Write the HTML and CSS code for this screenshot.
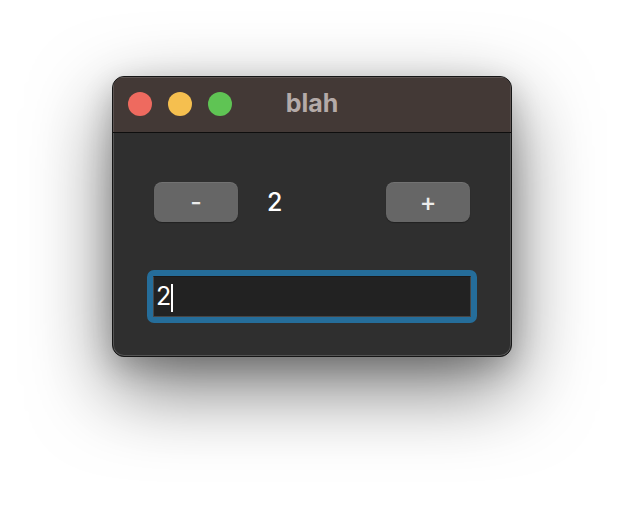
FILE: index.html
```html
<!DOCTYPE html>
<html lang="en">

<head>
    <meta charset="UTF-8" />
    <title>blah</title>
    <link rel="stylesheet" href="styles.css">
</head>

<body>
    <div class="window">
        <div class="titlebar">
            <div class="lights">
                <span class="light red"></span>
                <span class="light yellow"></span>
                <span class="light green"></span>
            </div>
            <div class="title">blah</div>
        </div>

        <div class="content">
            <div class="counter">
                <button class="step" onclick="bump(-1)">-</button>
                <span class="count" id="count">2</span>
                <button class="step plus" onclick="bump(1)">+</button>
            </div>
            <div class="entry">
                <input type="text" id="value" value="2" />
                <span class="caret" id="caret"></span>
            </div>
        </div>
    </div>

    <script>
        const countLabel = document.getElementById("count");
        const valueInput = document.getElementById("value");
        let count = 2;

        function bump(delta) {
            count += delta;
            countLabel.innerText = count;
            valueInput.value = count;
        }
    </script>
</body>

</html>
```

FILE: styles.css
```css
html,
body {
    height: 100%;
}

body {
    margin: 0;
    padding-top: 76px;
    box-sizing: border-box;
    background: #ffffff;
    font-family: Inter, "Open Sans", sans-serif;
}

.window {
    width: 400px;
    height: 281px;
    margin: 0 auto;
    box-sizing: border-box;
    border: 1px solid #161616;
    border-radius: 12px;
    background: #2f2f2f;
    overflow: hidden;
    box-shadow: inset 0 0 0 1px rgba(255, 255, 255, 0.18),
        0 30px 80px rgba(0, 0, 0, 0.55),
        0 10px 30px rgba(0, 0, 0, 0.2);
}

.titlebar {
    position: relative;
    height: 55px;
    background: #433936;
    border-bottom: 1px solid #0e0e0e;
    box-shadow: inset 1px 1px 0 rgba(255, 255, 255, 0.14), inset -1px 0 0 rgba(255, 255, 255, 0.14);
    display: flex;
    align-items: center;
    justify-content: center;
}

.lights {
    position: absolute;
    left: 15px;
    top: 15px;
    display: flex;
    gap: 16px;
}

.light {
    width: 24px;
    height: 24px;
    border-radius: 50%;
}

.red {
    background: #ee6a5f;
}

.yellow {
    background: #f5bf4f;
}

.green {
    background: #5fc454;
}

.title {
    color: #b4aaa8;
    font-size: 25px;
    font-weight: 700;
    margin-top: -3px;
}

.content {
    padding: 49px 34px 0 34px;
}

.counter {
    display: flex;
    align-items: center;
    padding: 0 7px;
}

.step {
    width: 84px;
    height: 40px;
    border: none;
    border-radius: 8px;
    background: #666666;
    color: #ececec;
    font-family: Inter, "Open Sans", sans-serif;
    font-size: 25px;
    font-weight: 500;
    padding: 0;
    box-shadow: inset 0 1px 0 rgba(255, 255, 255, 0.08), 0 1px 1px rgba(0, 0, 0, 0.3);
}

.plus {
    margin-left: auto;
}

.count {
    margin-left: 29px;
    color: #ffffff;
    font-size: 25px;
    font-weight: 500;
}

.entry {
    position: relative;
    margin-top: 48px;
    border: 6px solid #256d9a;
    border-radius: 7px;
}

.entry input {
    display: block;
    width: 100%;
    height: 41px;
    box-sizing: border-box;
    margin: 0;
    padding: 0 2px 2px;
    border: 1px solid #464646;
    border-top-color: #1a1a1a;
    background: #222222;
    color: #ffffff;
    font-family: Inter, "Open Sans", sans-serif;
    font-size: 25px;
    outline: none;
}

/* insertion cursor drawn after the text */
.caret {
    position: absolute;
    left: 18px;
    top: 8px;
    width: 2px;
    height: 28px;
    background: #ffffff;
}
```
